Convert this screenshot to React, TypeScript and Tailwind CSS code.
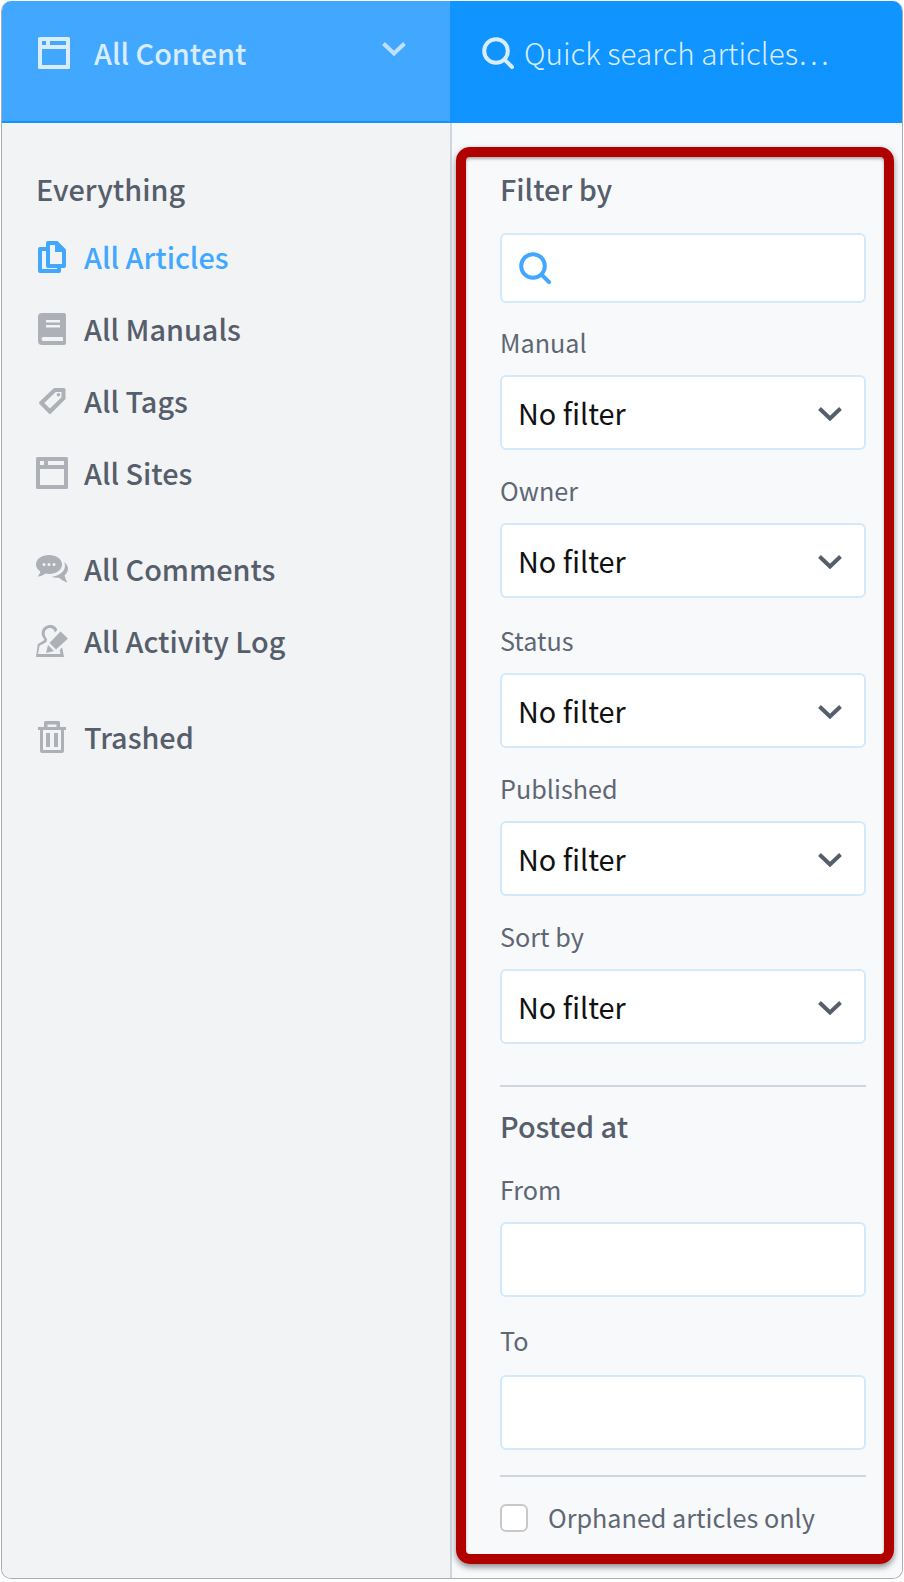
const fontStack = { fontFamily: '"Noto Sans CJK SC", "Noto Sans", sans-serif' };

function BrowserIcon({ className }: { className: string }) {
  return (
    <svg viewBox="0 0 32 32" className={className} fill="currentColor">
      <path fillRule="evenodd" d="M1.500 0h29A1.500 1.500 0 0 1 32 1.500v29a1.500 1.500 0 0 1-1.500 1.500h-29A1.500 1.500 0 0 1 0 30.500v-29A1.500 1.500 0 0 1 1.500 0zM4 12v16h24V12H4zm0-8v4h4V4H4zm8 0v4h16V4H12z" />
    </svg>
  );
}

function SearchIcon({ className }: { className: string }) {
  return (
    <svg viewBox="0 0 32 32" className={className} fill="none" stroke="currentColor" strokeWidth="4" strokeLinecap="round">
      <circle cx="14" cy="14" r="11.800" />
      <path d="M22.800 22.800L30 30" />
    </svg>
  );
}

function ArticlesIcon() {
  return (
    <svg viewBox="0 0 28 32" className="h-8 w-7 text-[#42a8ff]" fill="currentColor">
      <path fillRule="evenodd" d="M10 0h9.500L28 8.500V25a2 2 0 0 1-2 2h-3v3a2 2 0 0 1-2 2H2a2 2 0 0 1-2-2V8a2 2 0 0 1 2-2h6V2a2 2 0 0 1 2-2zm2 4v19h12V11h-7V4h-5zM8 10H4v18h15v-1h-9a2 2 0 0 1-2-2V10z" />
    </svg>
  );
}

function ManualIcon() {
  return (
    <svg viewBox="0 0 28 32" className="h-8 w-7 text-[#adb0b6]" fill="currentColor">
      <path fillRule="evenodd" d="M4 0h22a2 2 0 0 1 2 2v28a2 2 0 0 1-2 2H4a4 4 0 0 1-4-4V4a4 4 0 0 1 4-4zm4 7v2.500h14V7H8zm0 5v2.500h14V12H8zM5.500 24a2 2 0 0 0 0 4H25v-4H5.500z" />
    </svg>
  );
}

function TagIcon() {
  return (
    <svg viewBox="0 0 28 28" className="h-7 w-7 text-[#adb0b6]" fill="currentColor">
      <path fillRule="evenodd" d="M16 1h10a1.500 1.500 0 0 1 1.500 1.500V12L13 26.500a1.600 1.600 0 0 1-2.200 0L1.500 17a1.600 1.600 0 0 1 0-2.200L16 1zm1.700 4L6.300 15.900l5.600 5.500L23.500 10.300V5h-5.800zM20.500 6a1.800 1.800 0 1 1 0 3.600 1.800 1.800 0 0 1 0-3.600z" />
    </svg>
  );
}

function CommentsIcon() {
  return (
    <svg viewBox="0 0 32 28" className="h-7 w-8 text-[#adb0b6]" fill="currentColor">
      <path fillRule="evenodd" d="M13 0c7.200 0 13 4 13 9.500S20.200 19 13 19c-1.300 0-2.500-.1-3.700-.4C7.500 20.300 5 21.500 1.500 21.500c1.300-1.300 2.500-3 2.800-5C1.700 14.800 0 12.300 0 9.500 0 4 5.800 0 13 0zM8 8a1.500 1.500 0 1 0 0 3 1.500 1.500 0 0 0 0-3zm5 0a1.500 1.500 0 1 0 0 3 1.500 1.500 0 0 0 0-3zm5 0a1.500 1.500 0 1 0 0 3 1.500 1.500 0 0 0 0-3z" />
      <path d="M28 7c2.500 1.700 4 4 4 6.800 0 2.600-1.300 4.800-3.300 6.400.2 2.400 1.300 4.800 2.800 7.300-3.300-1-6.200-2.800-8.500-4.800-2.300.2-5.300-.1-7.500-1 6.300-.5 13.500-4.500 13.500-11 0-1.300-.3-2.500-1-3.700z" />
    </svg>
  );
}

function ActivityIcon() {
  return (
    <svg viewBox="0 0 32 32" className="h-8 w-8 text-[#adb0b6]" fill="currentColor">
      <path fillRule="evenodd" d="M14 0c3.500 0 6.500 2 7.300 5l-2.600 2.400C18.500 4.700 16.500 3 14 3c-3 0-5.300 2.300-5.300 5.300 0 2 .8 3.700 1.800 5 .6.800.6 1.700.3 2.600-.3.900-1 1.500-2 2L3.500 20.800C3 24 2.500 27 2 29h22.600l-.9-4.300 2.500-2.300L28 32H0c.5-4 1.200-8 1.700-12.800l6-3.600c.7-.4 1-.8 0-2C6.500 12 5.700 10.200 5.700 8.300 5.700 3.600 9.300 0 14 0z" />
      <path d="M24.500 6.500L32 13.500 20 24.500l-6.500-6.500z" />
      <path d="M12 20l6 6-8 2z" />
    </svg>
  );
}

function TrashIcon() {
  return (
    <svg viewBox="0 0 28 32" className="h-8 w-7 text-[#adb0b6]" fill="currentColor">
      <path fillRule="evenodd" d="M7.500 0h13A1.500 1.500 0 0 1 22 1.500V6h6v3h-2v21a2 2 0 0 1-2 2H4a2 2 0 0 1-2-2V9H0V6h6V1.500A1.500 1.500 0 0 1 7.500 0zm2 3.500V6h9V3.500h-9zM5 9v20h18V9H5zm3 3h4v14H8V12zm8 0h4v14h-4V12z" />
    </svg>
  );
}

function NavRow({ icon, label, active }: { icon: React.ReactNode; label: string; active?: boolean }) {
  return (
    <div className="flex h-[72px] items-center">
      <div className="flex w-8 justify-center">{icon}</div>
      <span className={`ml-4 text-[28.8px] leading-10 font-medium ${active ? "text-[#42a8ff]" : "text-[#565e6c]"}`}>{label}</span>
    </div>
  );
}

function FilterSelect({ label, mt }: { label: string; mt: string }) {
  return (
    <div className={mt}>
      <div className="text-[25.2px] leading-9 text-[#5f6774]">{label}</div>
      <div className="mt-[15px] flex h-[75px] items-center justify-between rounded-md border-2 border-[#d3e9fb] bg-white pl-4 pr-[22px]">
        <span className="text-[28.8px] leading-10 text-[#111]">No filter</span>
        <svg viewBox="0 0 24 14" className="mt-0.5 h-[14px] w-6 text-[#565e6c]" fill="none" stroke="currentColor" strokeWidth="4">
          <path d="M1.500 1.500L12 11.500 22.500 1.500" />
        </svg>
      </div>
    </div>
  );
}

function DateField({ label, mt, gap }: { label: string; mt: string; gap: string }) {
  return (
    <div className={mt}>
      <div className="text-[25.2px] leading-9 text-[#5f6774]">{label}</div>
      <div className={`${gap} h-[75px] rounded-md border-2 border-[#d3e9fb] bg-white`} />
    </div>
  );
}

export default function App() {
  return (
    <div className="h-[1582px] w-[904px] bg-white pl-px pt-px" style={fontStack}>
      <div className="flex h-[1578px] w-[902px] flex-col overflow-hidden rounded-[10px] border-x border-b border-[#a9adb2]">
        <div className="flex h-[122px] shrink-0">
          <div className="flex w-[448px] items-start border-b-2 border-[#1094ff] bg-[#42a8ff] pl-[36px] pt-[36px] text-[#d9edff]">
            <BrowserIcon className="h-8 w-8" />
            <span className="-mt-0.5 ml-6 text-[28.8px] leading-9 font-medium">All Content</span>
            <svg viewBox="0 0 24 14" className="ml-[136px] mt-[5px] h-[14px] w-6 text-[#bfe0ff]" fill="none" stroke="currentColor" strokeWidth="4">
              <path d="M1.500 1.500L12 11.500 22.500 1.500" />
            </svg>
          </div>
          <div className="flex flex-1 items-start bg-[#1094ff] pl-[32px] pt-[36px] text-[#d9edff]">
            <SearchIcon className="h-8 w-8" />
            <span className="-mt-0.5 ml-[10px] text-[29.6px] leading-9 font-light">Quick search articles…</span>
          </div>
        </div>
        <div className="flex flex-1">
          <div className="w-[450px] shrink-0 border-r-2 border-[#cfd6de] bg-[#f1f3f5] pl-[34px] pt-[46px]">
            <div className="text-[28.8px] leading-10 font-medium text-[#565e6c]">Everything</div>
            <div className="mt-3">
              <NavRow icon={<ArticlesIcon />} label="All Articles" active />
              <NavRow icon={<ManualIcon />} label="All Manuals" />
              <NavRow icon={<TagIcon />} label="All Tags" />
              <NavRow icon={<BrowserIcon className="h-8 w-8 text-[#adb0b6]" />} label="All Sites" />
            </div>
            <div className="mt-6">
              <NavRow icon={<CommentsIcon />} label="All Comments" />
              <NavRow icon={<ActivityIcon />} label="All Activity Log" />
            </div>
            <div className="mt-6">
              <NavRow icon={<TrashIcon />} label="Trashed" />
            </div>
          </div>
          <div className="flex-1 bg-[#f8f9fb] pb-[14px] pl-[4px] pr-[8px] pt-6">
            <div className="h-full rounded-[14px] border-10 border-[#b00000] pl-[34px] pr-[18px] pt-3 shadow-[0_3px_6px_rgba(0,0,0,0.45),inset_0_2px_3px_rgba(0,0,0,0.3)]">
              <div className="text-[28.8px] leading-10 font-medium text-[#565e6c]">Filter by</div>
              <div className="mt-6 flex h-[70px] items-center rounded-md border-2 border-[#d3e9fb] bg-white pl-[17px] text-[#42a8ff]">
                <SearchIcon className="h-8 w-8" />
              </div>
              <FilterSelect label="Manual" mt="mt-[21px]" />
              <FilterSelect label="Owner" mt="mt-[22px]" />
              <FilterSelect label="Status" mt="mt-6" />
              <FilterSelect label="Published" mt="mt-[22px]" />
              <FilterSelect label="Sort by" mt="mt-[22px]" />
              <div className="mt-[41px] h-0.5 bg-[#cfd6de]" />
              <div className="mt-[19px] text-[28.8px] leading-10 font-medium text-[#565e6c]">Posted at</div>
              <DateField label="From" mt="mt-[25px]" gap="mt-[15px]" />
              <DateField label="To" mt="mt-[25px]" gap="mt-[17px]" />
              <div className="mt-[25px] h-0.5 bg-[#cfd6de]" />
              <div className="mt-[27px] flex items-center">
                <div className="h-7 w-7 rounded-md border-2 border-[#c8c8c8] bg-white" />
                <span className="-mt-[3px] ml-5 text-[25.2px] leading-7 text-[#5f6774]">Orphaned articles only</span>
              </div>
            </div>
          </div>
        </div>
      </div>
    </div>
  );
}
